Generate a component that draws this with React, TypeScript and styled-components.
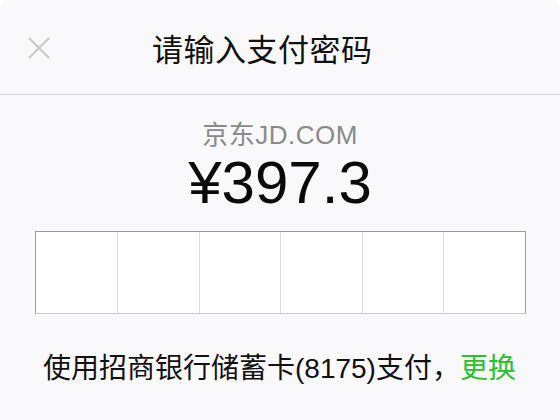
import React from "react";
import styled, { createGlobalStyle } from "styled-components";

const Global = createGlobalStyle`
  html, body { margin: 0; padding: 0; background: #ffffff; }
  body { font-family: "Liberation Sans", "Noto Sans CJK SC", sans-serif; }
`;

const Panel = styled.div`
  width: 560px;
  height: 420px;
  background: #f9f9fb;
  border-radius: 10px 10px 0 0;
  display: flex;
  flex-direction: column;
  overflow: hidden;
`;

const Header = styled.div`
  height: 95px;
  border-bottom: 1px solid #d6d6da;
  display: flex;
  align-items: center;
  padding-left: 28px;
  box-sizing: border-box;
`;

const Close = styled.button`
  width: 22px;
  height: 22px;
  padding: 0;
  border: none;
  background: none;
  display: flex;
  margin-top: 2px;
`;

const Title = styled.div`
  margin-left: 102px;
  font-size: 31px;
  color: #111;
  font-family: "Noto Sans CJK SC", sans-serif;
  letter-spacing: 0.5px;
`;

const Body = styled.div`
  display: flex;
  flex-direction: column;
  align-items: center;
  padding-top: 25px;
`;

const Merchant = styled.div`
  font-size: 26px;
  color: #8a8a8a;
  line-height: 30px;
  letter-spacing: 0.5px;
`;

const Amount = styled.div`
  font-size: 60px;
  color: #0a0a0a;
  line-height: 62px;
  margin-top: 2px;
`;

const Boxes = styled.div`
  margin-top: 17px;
  width: 491px;
  height: 83px;
  display: grid;
  grid-template-columns: repeat(6, 1fr);
  background: #fff;
  border: 1px solid #9a9a9a;
  border-bottom-color: #c8c8c8;
  box-sizing: border-box;
`;

const Cell = styled.div<{ $first?: boolean }>`
  border-left: ${(p) => (p.$first ? "none" : "1px solid #dcdcdc")};
`;

const Footer = styled.div`
  margin-top: 38px;
  font-size: 28px;
  color: #111;
  line-height: 34px;
  width: 100%;
  padding-left: 43px;
  box-sizing: border-box;
  white-space: nowrap;
`;

const Link = styled.span`
  color: #2cc02c;
`;

export default function App() {
  return (
    <>
      <Global />
      <Panel>
        <Header>
          <Close aria-label="close">
            <svg width="22" height="22" viewBox="0 0 22 22">
              <path d="M1.5 1.5L20.5 20.5M20.5 1.5L1.5 20.5" stroke="#c9c9c9" strokeWidth="2.2" strokeLinecap="round" />
            </svg>
          </Close>
          <Title>请输入支付密码</Title>
        </Header>
        <Body>
          <Merchant>京东JD.COM</Merchant>
          <Amount>¥397.3</Amount>
          <Boxes>
            {[0, 1, 2, 3, 4, 5].map((i) => (
              <Cell key={i} $first={i === 0} />
            ))}
          </Boxes>
          <Footer>
            使用招商银行储蓄卡(8175)支付，<Link>更换</Link>
          </Footer>
        </Body>
      </Panel>
    </>
  );
}
